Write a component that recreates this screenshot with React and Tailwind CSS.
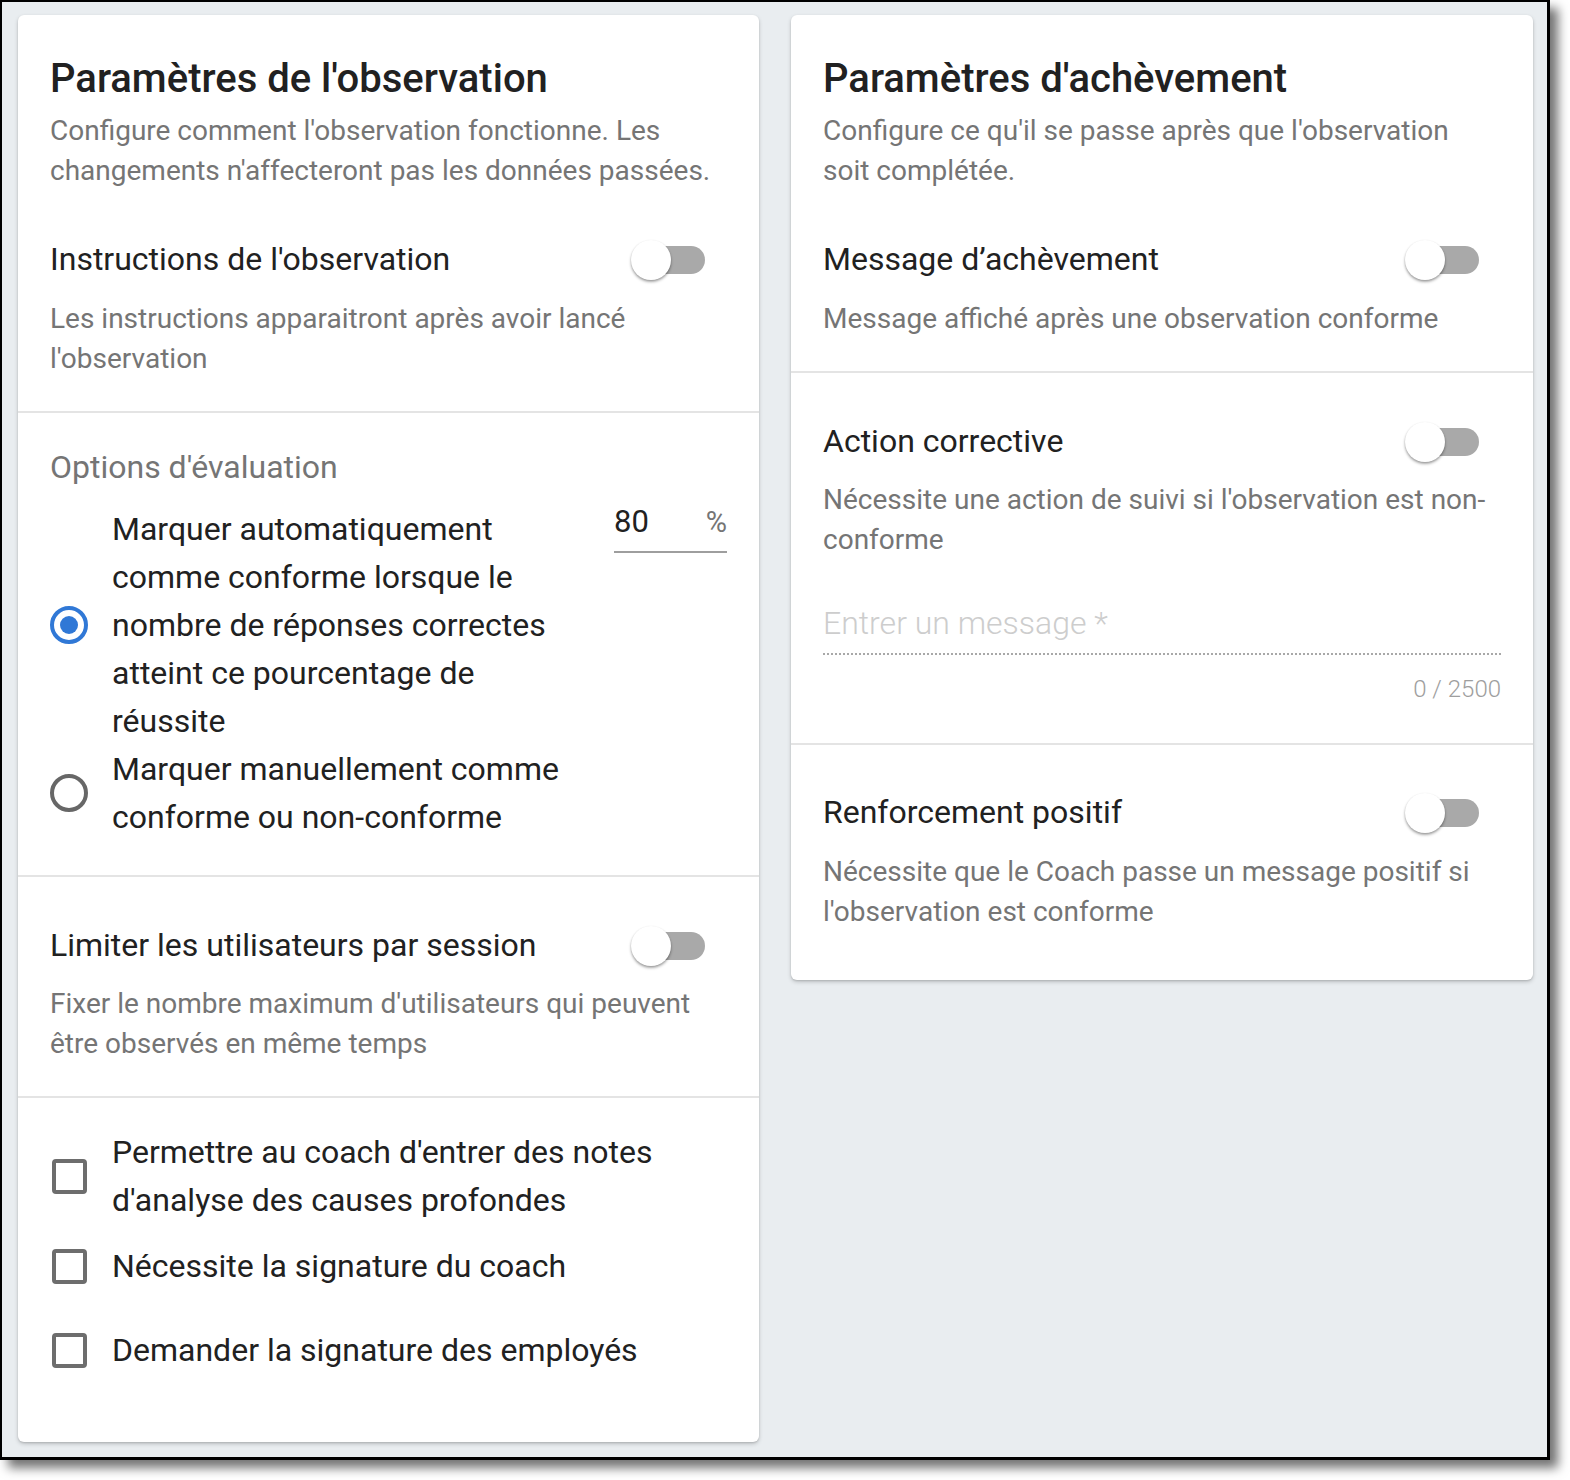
import React from "react";

function Toggle() {
  return (
    <div className="relative w-[74px] h-[40px] shrink-0">
      <div className="absolute left-[6px] top-[6px] w-[68px] h-[28px] rounded-full bg-[#a9a9a9]" />
      <div className="absolute left-0 top-0 w-[40px] h-[40px] rounded-full bg-white shadow-[0_2px_3px_rgba(0,0,0,0.3),0_1px_2px_rgba(0,0,0,0.15)]" />
    </div>
  );
}

function Divider() {
  return <div className="h-[2px] bg-[#e4e4e4]" />;
}

function ToggleRow({ label }) {
  return (
    <div className="flex items-center justify-between">
      <div className="text-[32px] leading-[40px] text-[#212121] whitespace-nowrap">{label}</div>
      <div className="mr-[22px] translate-y-[1px]">
        <Toggle />
      </div>
    </div>
  );
}

function Desc({ children, className = "" }) {
  return <div className={"text-[28px] leading-[40px] text-[#757575] whitespace-nowrap " + className}>{children}</div>;
}

function Checkbox() {
  return <div className="ml-[2px] w-[35px] h-[35px] rounded-[4px] border-[4px] border-[#6d6d6d]" />;
}

function CheckRow({ children, className = "" }) {
  return (
    <div className={"flex items-center " + className}>
      <div className="w-[62px] shrink-0">
        <Checkbox />
      </div>
      <div className="text-[32px] leading-[48px] text-[#212121] whitespace-nowrap">{children}</div>
    </div>
  );
}

function Header({ title, children }) {
  return (
    <div className="px-8 pt-[42px]">
      <div className="text-[40px] leading-[44px] font-medium text-[#212121] whitespace-nowrap">{title}</div>
      <div className="mt-[10px] text-[28px] leading-[40px] text-[#757575] whitespace-nowrap">{children}</div>
    </div>
  );
}

export default function App() {
  return (
    <div className="bg-white min-h-screen font-['Roboto',sans-serif]">
      <div className="w-[1550px] h-[1460px] border-black border-l-2 border-t-2 border-r-[3px] border-b-[3px] bg-[#e9edf0] shadow-[8px_8px_10px_rgba(0,0,0,0.55)] pl-4 pt-[13px]">
        <div className="grid grid-cols-[741px_742px] gap-x-[32px] items-start">
          {/* Left card */}
          <div className="bg-white rounded-[6px] shadow-[0_2px_4px_rgba(0,0,0,0.18),0_1px_2px_rgba(0,0,0,0.12)]">
            <Header title="Paramètres de l'observation">
              Configure comment l'observation fonctionne. Les
              <br />
              changements n'affecteront pas les données passées.
            </Header>
            <div className="px-8 pt-[48px] pb-[32px]">
              <ToggleRow label="Instructions de l'observation" />
              <Desc className="mt-[20px]">
                Les instructions apparaitront après avoir lancé
                <br />
                l'observation
              </Desc>
            </div>
            <Divider />
            <div className="px-8 pt-[34px] pb-[34px]">
              <div className="text-[32px] leading-[40px] text-[#757575]">Options d'évaluation</div>
              <div className="mt-[18px]">
                <div className="flex">
                  <div className="flex items-center">
                    <div className="w-[62px] shrink-0">
                      <div className="w-[38px] h-[38px] rounded-full border-[4px] border-[#3078d6] flex items-center justify-center">
                        <div className="w-[18px] h-[18px] rounded-full bg-[#3078d6]" />
                      </div>
                    </div>
                    <div className="text-[32px] leading-[48px] text-[#212121] whitespace-nowrap">
                      Marquer automatiquement
                      <br />
                      comme conforme lorsque le
                      <br />
                      nombre de réponses correctes
                      <br />
                      atteint ce pourcentage de
                      <br />
                      réussite
                    </div>
                  </div>
                  <div className="ml-auto mt-[-3px] w-[113px] h-[51px] border-b-2 border-[#9e9e9e] flex items-start justify-between">
                    <span className="text-[31px] leading-[40px] text-[#212121]">80</span>
                    <span className="text-[29px] leading-[40px] text-[#757575]">%</span>
                  </div>
                </div>
                <div className="flex items-center">
                  <div className="w-[62px] shrink-0">
                    <div className="w-[38px] h-[38px] rounded-full border-[4px] border-[#676767]" />
                  </div>
                  <div className="text-[32px] leading-[48px] text-[#212121] whitespace-nowrap">
                    Marquer manuellement comme
                    <br />
                    conforme ou non-conforme
                  </div>
                </div>
              </div>
            </div>
            <Divider />
            <div className="px-8 pt-[48px] pb-[32px]">
              <ToggleRow label="Limiter les utilisateurs par session" />
              <Desc className="mt-[19px]">
                Fixer le nombre maximum d'utilisateurs qui peuvent
                <br />
                être observés en même temps
              </Desc>
            </div>
            <Divider />
            <div className="px-8 pt-[30px] pb-[68px]">
              <CheckRow>
                Permettre au coach d'entrer des notes
                <br />
                d'analyse des causes profondes
              </CheckRow>
              <CheckRow className="mt-[18px]">Nécessite la signature du coach</CheckRow>
              <CheckRow className="mt-[36px]">Demander la signature des employés</CheckRow>
            </div>
          </div>

          {/* Right card */}
          <div className="bg-white rounded-[6px] shadow-[0_2px_4px_rgba(0,0,0,0.18),0_1px_2px_rgba(0,0,0,0.12)]">
            <Header title="Paramètres d'achèvement">
              Configure ce qu'il se passe après que l'observation
              <br />
              soit complétée.
            </Header>
            <div className="px-8 pt-[48px] pb-[32px]">
              <ToggleRow label="Message d’achèvement" />
              <Desc className="mt-[20px]">Message affiché après une observation conforme</Desc>
            </div>
            <Divider />
            <div className="px-8 pt-[48px] pb-[39px]">
              <ToggleRow label="Action corrective" />
              <Desc className="mt-[19px]">
                Nécessite une action de suivi si l'observation est non-
                <br />
                conforme
              </Desc>
              <div className="mt-[43px] text-[32px] leading-[40px] font-light text-[#cdcdcd]">Entrer un message *</div>
              <div className="mt-[10px] border-b-2 border-dotted border-[#a8a8a8]" />
              <div className="mt-[19px] text-right text-[24px] leading-[30px] font-light text-[#9e9e9e]">0 / 2500</div>
            </div>
            <Divider />
            <div className="px-8 pt-[47px] pb-[48px]">
              <ToggleRow label="Renforcement positif" />
              <Desc className="mt-[20px]">
                Nécessite que le Coach passe un message positif si
                <br />
                l'observation est conforme
              </Desc>
            </div>
          </div>
        </div>
      </div>
    </div>
  );
}
